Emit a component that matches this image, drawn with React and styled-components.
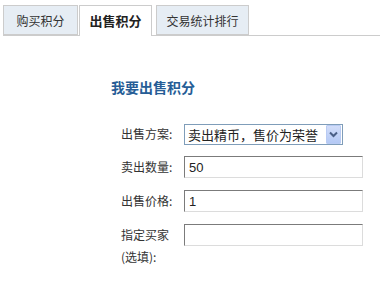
import React from "react";
import styled, { createGlobalStyle } from "styled-components";

const Global = createGlobalStyle`
  html, body { margin: 0; padding: 0; background: #fff; }
  body { font-family: "Liberation Sans", "Noto Sans CJK SC", sans-serif; font-size: 12px; color: #333; }
`;

const Page = styled.div`
  width: 380px;
  height: 286px;
  overflow: hidden;
  background: #fff;
`;

const TabBar = styled.div`
  display: flex;
  align-items: flex-end;
  margin: 5px 0 0 3px;
  height: 30px;
  border-bottom: 1px solid #cccccc;
`;

const Tab = styled.div`
  box-sizing: border-box;
  height: ${(p) => (p.$active ? "31px" : "30px")};
  margin-bottom: ${(p) => (p.$active ? "-1px" : "0")};
  margin-right: ${(p) => p.$gap}px;
  width: ${(p) => p.$w}px;
  display: flex;
  align-items: center;
  justify-content: center;
  padding-bottom: ${(p) => (p.$active ? "1px" : "0")};
  background: ${(p) => (p.$active ? "#ffffff" : "#e6edf4")};
  border: 1px solid #cccccc;
  border-bottom: ${(p) => (p.$active ? "none" : "1px solid #cccccc")};
  font-family: "Noto Sans CJK SC", sans-serif;
  font-size: ${(p) => (p.$active ? "13px" : "12px")};
  font-weight: ${(p) => (p.$active ? 700 : 400)};
  color: ${(p) => (p.$active ? "#222" : "#333")};
`;

const Heading = styled.h2`
  margin: 41px 0 0 111px;
  font-family: "Noto Sans CJK SC", sans-serif;
  font-size: 14px;
  line-height: 20px;
  font-weight: 700;
  color: #265d96;
`;

const Form = styled.div`
  display: grid;
  grid-template-columns: 63px auto;
  row-gap: 12px;
  margin: 27px 0 0 121px;
  align-items: start;
`;

const Label = styled.div`
  font-family: "Noto Sans CJK SC", sans-serif;
  font-size: 12px;
  line-height: ${(p) => p.$lh || 22}px;
  color: #333;
`;

const SelectWrap = styled.div`
  position: relative;
  width: 159px;
  height: 21px;
  margin-bottom: -1px;
`;

const Select = styled.select`
  appearance: none;
  box-sizing: border-box;
  width: 159px;
  height: 21px;
  margin: 0;
  padding: 0 0 0 3px;
  border: 1px solid #7f9db9;
  border-radius: 0;
  background: #fff;
  font-family: "Noto Sans CJK SC", sans-serif;
  font-size: 13px;
  color: #222;
  outline: none;
`;

const DropButton = styled.div`
  position: absolute;
  right: 2px;
  top: 1px;
  width: 15px;
  height: 19px;
  box-sizing: border-box;
  border: 1px solid #b9cbf3;
  border-radius: 1px;
  background: linear-gradient(#d2ddf9, #b4c9f5);
  display: flex;
  align-items: center;
  justify-content: center;
  pointer-events: none;
`;

const Input = styled.input`
  box-sizing: border-box;
  width: 179px;
  height: 22px;
  margin: 0;
  padding: 0 0 0 4px;
  border: 1px solid;
  border-color: #7b7b7b #dcdcdc #dcdcdc #7b7b7b;
  font-family: "Liberation Sans", "Noto Sans CJK SC", sans-serif;
  font-size: 13px;
  color: #222;
  outline: none;
  background: #fff;
`;

const LabelStack = styled.div`
  display: flex;
  flex-direction: column;
`;

export default function App() {
  return (
    <Page>
      <Global />
      <TabBar>
        <Tab $w={75} $gap={1}>购买积分</Tab>
        <Tab $active $w={73} $gap={4}>出售积分</Tab>
        <Tab $w={93} $gap={0}>交易统计排行</Tab>
      </TabBar>
      <Heading>我要出售积分</Heading>
      <Form>
        <Label $lh={20}>出售方案:</Label>
        <SelectWrap>
          <Select defaultValue="a">
            <option value="a">卖出精币，售价为荣誉</option>
          </Select>
          <DropButton>
            <svg width="9" height="7" viewBox="0 0 9 7">
              <path d="M1 1.5 L4.5 5 L8 1.5" fill="none" stroke="#4a5f86" strokeWidth="2" />
            </svg>
          </DropButton>
        </SelectWrap>
        <Label>卖出数量:</Label>
        <Input defaultValue="50" />
        <Label>出售价格:</Label>
        <Input defaultValue="1" />
        <LabelStack>
          <Label>指定买家</Label>
          <Label>(选填):</Label>
        </LabelStack>
        <Input defaultValue="" />
      </Form>
    </Page>
  );
}
